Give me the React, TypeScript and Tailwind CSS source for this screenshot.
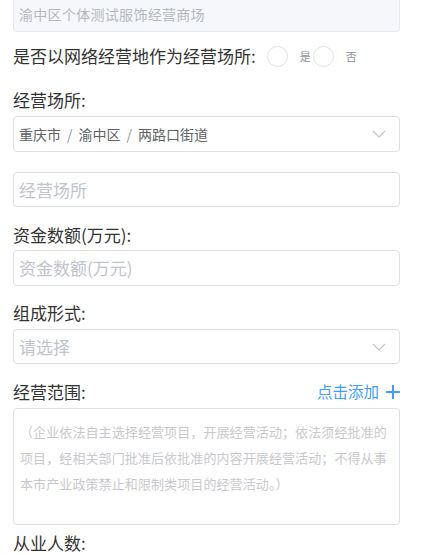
import React from "react";

const font = { fontFamily: '"Noto Sans CJK SC", "Noto Sans", sans-serif' };

function Chevron() {
    return (
        <svg width="14" height="8" viewBox="0 0 14 8" fill="none" className="shrink-0">
            <path d="M1 1l6 6 6-6" stroke="#c0c4cc" strokeWidth="1.1" />
        </svg>
    );
}

function Label({ text, className = "" }: { text: string; className?: string }) {
    return <div className={`h-[24px] leading-[24px] text-[17px] text-[#333333] ${className}`}>{text}</div>;
}

function Radio({ label }: { label: string }) {
    return (
        <div className="flex items-center">
            <span className="w-[21px] h-[21px] rounded-full border border-[#dcdfe6] bg-white" />
            <span className="ml-[12px] text-[11px] text-[#909399]">{label}</span>
        </div>
    );
}

export default function App() {
    const area = ["重庆市", "渝中区", "两路口街道"];
    return (
        <div className="bg-white w-[424px] h-[555px] overflow-hidden pl-[13px] pr-[24px]" style={font}>
            <div className="-mt-[4px] h-[36px] rounded-[4px] border border-[#e4e7ed] bg-[#f5f7fa] flex items-center pl-[5px] text-[14px] tracking-[0.3px] text-[#b4b7bd]">
                渝中区个体测试服饰经营商场
            </div>

            <div className="mt-[12px] h-[24px] flex items-center">
                <span className="text-[17px] text-[#333333] leading-[24px]">是否以网络经营地作为经营场所:</span>
                <div className="ml-[11px] flex items-center gap-[2px]">
                    <Radio label="是" />
                    <Radio label="否" />
                </div>
            </div>

            <Label text="经营场所:" className="mt-[20px]" />
            <div className="mt-[4px] h-[36px] rounded-[4px] border border-[#dcdfe6] flex items-center justify-between pl-[5px] pr-[13px] text-[14px] text-[#606266]">
                <span className="flex items-center">
                    {area.map((a, i) => (
                        <React.Fragment key={i}>
                            {i > 0 && <span className="px-[6px] text-[#909399]">/</span>}
                            <span>{a}</span>
                        </React.Fragment>
                    ))}
                </span>
                <Chevron />
            </div>

            <div className="mt-[20px] h-[35px] rounded-[4px] border border-[#dcdfe6] flex items-center pl-[5px] text-[17px] text-[#c0c4cc]">
                经营场所
            </div>

            <Label text="资金数额(万元):" className="mt-[16px]" />
            <div className="mt-[3px] h-[36px] rounded-[4px] border border-[#dcdfe6] flex items-center pl-[5px] text-[17px] text-[#c0c4cc]">
                资金数额(万元)
            </div>

            <Label text="组成形式:" className="mt-[15px]" />
            <div className="mt-[4px] h-[35px] rounded-[4px] border border-[#dcdfe6] flex items-center justify-between pl-[5px] pr-[13px] text-[17px] text-[#c0c4cc]">
                <span>请选择</span>
                <Chevron />
            </div>

            <div className="mt-[16px] h-[24px] flex items-center justify-between">
                <span className="text-[17px] text-[#333333] leading-[24px]">经营范围:</span>
                <span className="flex items-center text-[15.5px] text-[#409eff]">
                    点击添加
                    <svg width="14" height="14" viewBox="0 0 14 14" className="ml-[7px]">
                        <path d="M7 0v14M0 7h14" stroke="#409eff" strokeWidth="2" />
                    </svg>
                </span>
            </div>
            <div className="mt-[4px] h-[117px] rounded-[4px] border border-[#dcdfe6] px-[6px] pt-[10px] text-[13px] leading-[26px] tracking-[0.1px] text-[#c8c9cc]">
                （企业依法自主选择经营项目，开展经营活动；依法须经批准的项目，经相关部门批准后依批准的内容开展经营活动；不得从事本市产业政策禁止和限制类项目的经营活动。）
            </div>

            <Label text="从业人数:" className="mt-[6px]" />
        </div>
    );
}
